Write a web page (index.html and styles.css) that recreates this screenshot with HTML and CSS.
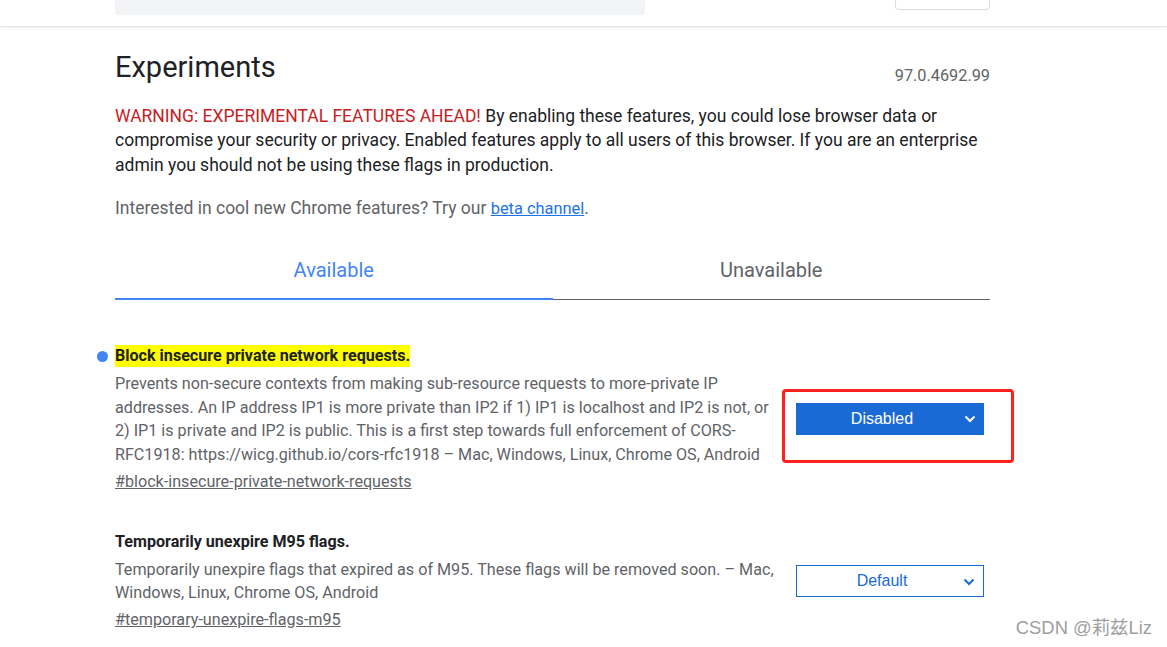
FILE: index.html
```html
<!DOCTYPE html>
<html>
<head>
<meta charset="utf-8">
<link rel="stylesheet" href="styles.css">
</head>
<body>
<header class="header">
  <div class="header-inner">
    <div class="search"></div>
    <div class="reset"></div>
  </div>
</header>
<main class="content">
  <div class="title-row">
    <h1 class="title">Experiments</h1>
    <span class="version">97.0.4692.99</span>
  </div>
  <p class="warning"><span class="warn-red">WARNING: EXPERIMENTAL FEATURES AHEAD!</span> By enabling these features, you could lose browser data or compromise your security or privacy. Enabled features apply to all users of this browser. If you are an enterprise admin you should not be using these flags in production.</p>
  <p class="beta">Interested in cool new Chrome features? Try our <a class="beta-link" href="#">beta channel</a>.</p>
  <div class="tabs">
    <div class="tab tab-active">Available</div>
    <div class="tab">Unavailable</div>
  </div>
  <section class="flag flag-first">
    <div class="flag-text">
      <h2 class="flag-title"><span class="dot"></span><span class="hl">Block insecure private network requests.</span></h2>
      <p class="flag-desc">Prevents non-secure contexts from making sub-resource requests to more-private IP addresses. An IP address IP1 is more private than IP2 if 1) IP1 is localhost and IP2 is not, or 2) IP1 is private and IP2 is public. This is a first step towards full enforcement of CORS-RFC1918: https://wicg.github.io/cors-rfc1918 – Mac, Windows, Linux, Chrome OS, Android</p>
      <a class="flag-link" href="#">#block-insecure-private-network-requests</a>
    </div>
    <div class="flag-ctl">
      <div class="select select-on">Disabled<svg class="chev" viewBox="0 0 12 8" width="12" height="8"><path d="M1.5 1.5 L6 6 L10.5 1.5" fill="none" stroke="currentColor" stroke-width="2"/></svg></div>
      <div class="annot"></div>
    </div>
  </section>
  <section class="flag">
    <div class="flag-text">
      <h2 class="flag-title">Temporarily unexpire M95 flags.</h2>
      <p class="flag-desc">Temporarily unexpire flags that expired as of M95. These flags will be removed soon. – Mac, Windows, Linux, Chrome OS, Android</p>
      <a class="flag-link" href="#">#temporary-unexpire-flags-m95</a>
    </div>
    <div class="flag-ctl">
      <div class="select select-off">Default<svg class="chev" viewBox="0 0 12 8" width="12" height="8"><path d="M1.5 1.5 L6 6 L10.5 1.5" fill="none" stroke="currentColor" stroke-width="2"/></svg></div>
    </div>
  </section>
</main>
<div class="watermark">CSDN @莉兹Liz</div>
</body>
</html>
```
FILE: styles.css
```css
html, body {
  margin: 0;
  padding: 0;
  background: #fff;
  font-family: Roboto, "Liberation Sans", Arial, sans-serif;
  color: #202124;
  overflow: hidden;
}
body {
  width: 1167px;
  height: 647px;
  position: relative;
}
.header {
  height: 26px;
  border-bottom: 1px solid #e6e6e6;
  box-shadow: 0 1px 3px rgba(0,0,0,0.08);
}
.header-inner {
  width: 875px;
  margin-left: 115px;
  display: flex;
  justify-content: space-between;
  align-items: flex-start;
}
.search {
  width: 530px;
  height: 15px;
  background: #f1f3f4;
  border-radius: 0 0 3px 3px;
}
.reset {
  width: 93px;
  height: 9px;
  border: 1px solid #dadce0;
  border-top: none;
  border-radius: 0 0 4px 4px;
}
.content {
  width: 875px;
  margin-left: 115px;
}
.title-row {
  display: flex;
  justify-content: space-between;
  align-items: baseline;
  margin-top: 22px;
}
.title {
  font-size: 29px;
  font-weight: 400;
  margin: 0;
  line-height: 36px;
  color: #202124;
}
.version {
  font-size: 16.3px;
  color: #5f6368;
  position: relative;
  top: 4px;
}
.warning {
  font-size: 17.5px;
  line-height: 24.3px;
  margin: 19px 0 0;
  color: #202124;
}
.warn-red {
  color: #c5221f;
}
.beta {
  font-size: 17.5px;
  line-height: 24px;
  margin: 19px 0 0;
  color: #5f6368;
}
.beta-link {
  color: #1a73e8;
  font-size: 16.4px;
}
.tabs {
  display: flex;
  margin-top: 37px;
}
.tab {
  flex: 1;
  text-align: center;
  font-size: 20px;
  color: #5f6368;
  height: 41px;
  line-height: 24px;
  border-bottom: 1px solid #5f6368;
}
.tab-active {
  color: #4285f4;
  border-bottom: 2px solid #4285f4;
  height: 39px;
  padding-bottom: 1px;
}
.flag {
  display: flex;
  justify-content: space-between;
}
.flag-first {
  margin-top: 44px;
}
.flag + .flag {
  margin-top: 36px;
}
.flag-text {
  width: 665px;
}
.flag-title {
  font-size: 16.1px;
  font-weight: 700;
  line-height: 24px;
  margin: 0;
  color: #202124;
  position: relative;
}
.hl {
  background: #ffff00;
  padding: 1px 0 2px;
}
.dot {
  position: absolute;
  left: -18px;
  top: 7px;
  width: 11px;
  height: 11px;
  border-radius: 50%;
  background: #4285f4;
}
.flag-desc {
  font-size: 16.15px;
  line-height: 23.7px;
  margin: 4px 0 0;
  color: #5f6368;
}
.flag-link {
  display: inline-block;
  margin-top: 3px;
  font-size: 16.15px;
  line-height: 24px;
  color: #5f6368;
}
.flag-ctl {
  width: 194px;
  position: relative;
  display: flex;
  align-items: center;
}
.select {
  width: 188px;
  height: 32px;
  box-sizing: border-box;
  padding-right: 16px;
  font-family: "Liberation Sans", Arial, sans-serif;
  font-size: 16px;
  display: flex;
  align-items: center;
  justify-content: center;
  position: relative;
}
.select-on {
  background: #1a6ad6;
  color: #fff;
}
.select-off {
  border: 1.5px solid #1a6ad6;
  color: #1a6ad6;
}
.chev {
  position: absolute;
  right: 8px;
  top: 12px;
}
.annot {
  position: absolute;
  left: -14px;
  top: 50%;
  margin-top: -30px;
  width: 232px;
  height: 74px;
  box-sizing: border-box;
  border: 3px solid #ff2020;
  border-radius: 4px;
}
.watermark {
  position: absolute;
  right: 15px;
  bottom: 8px;
  font-family: "Liberation Sans", "Noto Sans CJK SC", sans-serif;
  font-size: 18.4px;
  color: #9e9e9e;
}
```
